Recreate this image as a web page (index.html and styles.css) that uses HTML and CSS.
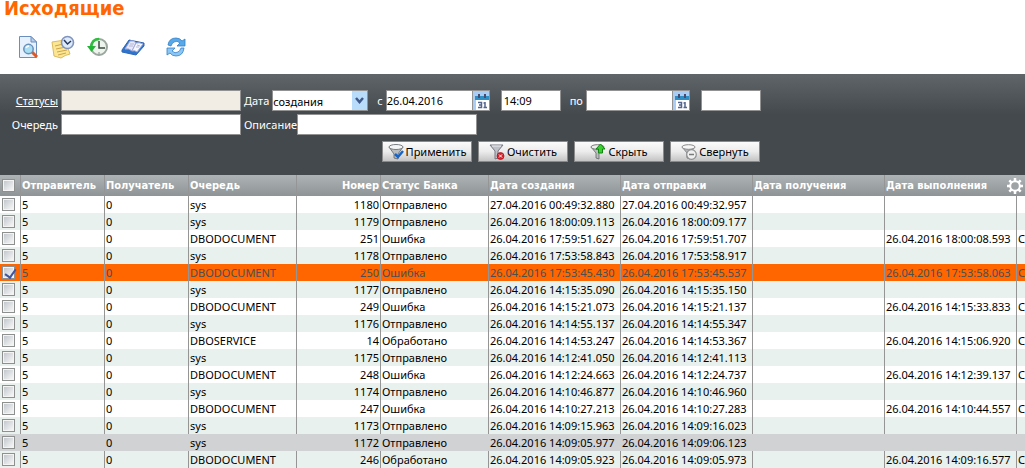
FILE: index.html
```html
<!DOCTYPE html>
<html lang="ru">
<head>
<meta charset="utf-8">
<title>Исходящие</title>
<link rel="stylesheet" href="styles.css">
</head>
<body>
<header class="page-head">
  <h1 class="title">Исходящие</h1>
  <nav class="toolbar" aria-label="Действия">
    <button class="tool" type="button" aria-label="Просмотр">
      <svg viewBox="0 0 24 24"><path d="M3.500 1.500H15L20.500 7V22.500H3.500Z" fill="#e6f1fd" stroke="#6a8fbd"/><path d="M15 1.500V7H20.500Z" fill="#b7cfeb" stroke="#6a8fbd"/><path d="M16 17L21 22" stroke="#e8561c" stroke-width="3"/><circle cx="12.500" cy="14" r="4.700" fill="#a9dff2" stroke="#668fba" stroke-width="1.500"/><path d="M10 13Q11 11 13 11" fill="none" stroke="#fff" stroke-width="1.500"/></svg>
    </button>
    <button class="tool" type="button" aria-label="Расписание">
      <svg viewBox="0 0 24 24"><path d="M1 7L14 5L19 19Q14 20 10 23L3 21Z" fill="#fbe694" stroke="#dcbb5c"/><path d="M4 11L12 9M5 14L15 12M6 17L16 15M7 20L15 18" stroke="#cda449"/><circle cx="16.500" cy="7.500" r="6" fill="#dceafa" stroke="#8094bd" stroke-width="1.600"/><path d="M13 5L16.500 9L20 6" fill="none" stroke="#26385f" stroke-width="1.500"/></svg>
    </button>
    <button class="tool" type="button" aria-label="История">
      <svg viewBox="0 0 24 24"><circle cx="13" cy="12" r="8" fill="#edf3ed" stroke="#9aa69e" stroke-width="2"/><path d="M13 6V13H19" fill="none" stroke="#3d4942" stroke-width="1.500"/><path d="M13 4Q6 4 5 12" fill="none" stroke="#2fbd3d" stroke-width="2.500"/><path d="M1 11H10L5.500 17Z" fill="#20b832"/><path d="M13 17V19M8 12H9" stroke="#7e8c84"/></svg>
    </button>
    <button class="tool" type="button" aria-label="Справочник">
      <svg viewBox="0 0 24 24"><path d="M1 15L8 5L23 8V11L15 20L1 17Z" fill="#2d74cf" stroke="#2f66b4"/><path d="M4 14L9 6Q13 5 15 8L11 16Q8 13 4 14Z" fill="#e7e8fa" stroke="#a4a9d4"/><path d="M15 8Q18 7 22 9L16 17Q14 15 11 16Z" fill="#f7f7ff" stroke="#a4a9d4"/><path d="M8 11L12 11M9 9L13 9M15 12L18 12M16 10L19 11" stroke="#b4b7d6"/></svg>
    </button>
    <button class="tool tool-refresh" type="button" aria-label="Обновить">
      <svg viewBox="0 0 24 24"><path d="M4 10Q5 3 12 3Q16 3 18 6L21 4V11H13L16 8Q13 5 10 7Q8 8 7 11Z" fill="#57a9e9" stroke="#3480c8" stroke-width=".8"/><path d="M20 13Q19 21 12 21Q8 21 6 18L3 20V13H11L8 16Q11 19 14 17Q16 16 17 13Z" fill="#8bc7f5" stroke="#3480c8" stroke-width=".8"/></svg>
    </button>
  </nav>
</header>

<form class="filter">
  <div class="line">
    <label class="lead" for="statuses"><u>Статусы</u></label>
    <input class="field wide readonly" id="statuses" readonly>
    <label class="lbl" for="datekind">Дата</label>
    <span class="picker">
      <select class="field pick" id="datekind"><option>создания</option></select>
      <svg class="arrow" viewBox="0 0 15 19"><path d="M0 0H15V19H0Z" fill="#b9dcfb"/><path d="M4 7L7.500 11L11 7" fill="none" stroke="#405a8c" stroke-width="2.500"/></svg>
    </span>
    <label class="lbl from" for="d1">с</label>
    <input class="field date" id="d1" value="26.04.2016">
    <button class="cal" type="button" aria-label="Выбрать дату начала">
      <svg viewBox="0 0 16 19"><path d="M0 0H16V19H0Z" fill="#a9cdf4"/><path d="M2 5H16V9H2Z" fill="#2f8fc4"/><path d="M3 9H16V19H3Z" fill="#fff"/><path d="M6 3V7M12 3V7" stroke="#4b4a6c" stroke-width="2"/><path d="M5 11.500H8.500V16.500H5M6 14H8.500M12 11V17M10.500 12H12M10.500 16.500H14" fill="none" stroke="#53668f" stroke-width="1.500"/></svg>
    </button>
    <input class="field time" aria-label="Время начала" value="14:09">
    <label class="lbl to" for="d2">по</label>
    <input class="field date" id="d2">
    <button class="cal" type="button" aria-label="Выбрать дату окончания">
      <svg viewBox="0 0 16 19"><path d="M0 0H16V19H0Z" fill="#a9cdf4"/><path d="M2 5H16V9H2Z" fill="#2f8fc4"/><path d="M3 9H16V19H3Z" fill="#fff"/><path d="M6 3V7M12 3V7" stroke="#4b4a6c" stroke-width="2"/><path d="M5 11.500H8.500V16.500H5M6 14H8.500M12 11V17M10.500 12H12M10.500 16.500H14" fill="none" stroke="#53668f" stroke-width="1.500"/></svg>
    </button>
    <input class="field time" aria-label="Время окончания">
  </div>
  <div class="line">
    <label class="lead" for="queue">Очередь</label>
    <input class="field wide" id="queue">
    <label class="lbl tight" for="descr">Описание</label>
    <input class="field wide" id="descr">
  </div>
  <div class="actions">
    <button class="btn" type="button"><svg viewBox="0 0 16 16"><path d="M1 3L6 10V14L10 15V10L15 3Z" fill="#b9bdc0" stroke="#5d6265" stroke-width=".8"/><ellipse cx="8" cy="3" rx="7" ry="2.500" fill="#f4f5f5" stroke="#777c80"/><path d="M7 10L10 13L15 7" fill="none" stroke="#1664c8" stroke-width="2.500"/></svg>Применить</button>
    <button class="btn" type="button"><svg viewBox="0 0 16 16"><path d="M1 1H14L9 7V14L6 15V7Z" fill="#bfc1c9" stroke="#777983"/><path d="M3 2H12" stroke="#eeeef4"/><circle cx="11.500" cy="12" r="3.500" fill="#d8222c" stroke="#a60f19" stroke-width=".7"/><path d="M10 10.500L13 13.500M13 10.500L10 13.500" stroke="#fff"/></svg>Очистить</button>
    <button class="btn" type="button"><svg viewBox="0 0 16 16"><path d="M1 3L6 9V14L9 15V9L14 3Z" fill="#b9bdbd" stroke="#626666" stroke-width=".8"/><ellipse cx="7.500" cy="3" rx="6.500" ry="2.300" fill="#eee" stroke="#777"/><path d="M10.500 0L15 5H12.500V9H8.500V5H6Z" fill="#39d02e" stroke="#158316"/></svg>Скрыть</button>
    <button class="btn" type="button"><svg viewBox="0 0 16 16"><path d="M1 3L6 9V14L9 15V9L14 3Z" fill="#b6b8b9" stroke="#77797a" stroke-width=".8"/><ellipse cx="7.500" cy="3" rx="6.500" ry="2.300" fill="#f7f7f7" stroke="#8b8b8b"/><circle cx="10.500" cy="10.500" r="4.800" fill="#efefef" stroke="#8d8f90" stroke-width="1.200"/><path d="M8 10.500H13" stroke="#77797a" stroke-width="1.500"/></svg>Свернуть</button>
  </div>
</form>

<main class="grid">
<table class="list">
<colgroup><col class="c-check"><col class="c-party"><col class="c-party"><col class="c-queue"><col class="c-party"><col class="c-queue"><col class="c-date"><col class="c-date"><col class="c-date"><col class="c-date"><col></colgroup>
<thead><tr><th><input type="checkbox" aria-label="Выбрать все"></th><th>Отправитель</th><th>Получатель</th><th>Очередь</th><th class="num">Номер</th><th>Статус Банка</th><th>Дата создания</th><th>Дата отправки</th><th>Дата получения</th><th colspan="2"><span class="last-head">Дата выполнения<button class="gear" type="button" aria-label="Настройки"><svg viewBox="0 0 18 18"><g stroke="#fff" stroke-width="2.500"><path d="M9 1V17M1 9H17M3.300 3.300L14.700 14.700M14.700 3.300L3.300 14.700"/></g><circle cx="9" cy="9" r="4.800" fill="#9ea3a6" stroke="#fff" stroke-width="2"/></svg></button></span></th></tr></thead>
<tbody>
<tr><td><input type="checkbox" aria-label="1180"></td><td>5</td><td>0</td><td>sys</td><td class="num">1180</td><td>Отправлено</td><td>27.04.2016 00:49:32.880</td><td>27.04.2016 00:49:32.957</td><td></td><td></td><td></td></tr>
<tr><td><input type="checkbox" aria-label="1179"></td><td>5</td><td>0</td><td>sys</td><td class="num">1179</td><td>Отправлено</td><td>26.04.2016 18:00:09.113</td><td>26.04.2016 18:00:09.177</td><td></td><td></td><td></td></tr>
<tr><td><input type="checkbox" aria-label="251"></td><td>5</td><td>0</td><td>DBODOCUMENT</td><td class="num">251</td><td>Ошибка</td><td>26.04.2016 17:59:51.627</td><td>26.04.2016 17:59:51.707</td><td></td><td>26.04.2016 18:00:08.593</td><td>С</td></tr>
<tr><td><input type="checkbox" aria-label="1178"></td><td>5</td><td>0</td><td>sys</td><td class="num">1178</td><td>Отправлено</td><td>26.04.2016 17:53:58.843</td><td>26.04.2016 17:53:58.917</td><td></td><td></td><td></td></tr>
<tr class="selected"><td><input type="checkbox" aria-label="250" checked></td><td>5</td><td>0</td><td>DBODOCUMENT</td><td class="num">250</td><td>Ошибка</td><td>26.04.2016 17:53:45.430</td><td>26.04.2016 17:53:45.537</td><td></td><td>26.04.2016 17:53:58.063</td><td>С</td></tr>
<tr><td><input type="checkbox" aria-label="1177"></td><td>5</td><td>0</td><td>sys</td><td class="num">1177</td><td>Отправлено</td><td>26.04.2016 14:15:35.090</td><td>26.04.2016 14:15:35.150</td><td></td><td></td><td></td></tr>
<tr><td><input type="checkbox" aria-label="249"></td><td>5</td><td>0</td><td>DBODOCUMENT</td><td class="num">249</td><td>Ошибка</td><td>26.04.2016 14:15:21.073</td><td>26.04.2016 14:15:21.137</td><td></td><td>26.04.2016 14:15:33.833</td><td>С</td></tr>
<tr><td><input type="checkbox" aria-label="1176"></td><td>5</td><td>0</td><td>sys</td><td class="num">1176</td><td>Отправлено</td><td>26.04.2016 14:14:55.137</td><td>26.04.2016 14:14:55.347</td><td></td><td></td><td></td></tr>
<tr><td><input type="checkbox" aria-label="14"></td><td>5</td><td>0</td><td>DBOSERVICE</td><td class="num">14</td><td>Обработано</td><td>26.04.2016 14:14:53.247</td><td>26.04.2016 14:14:53.367</td><td></td><td>26.04.2016 14:15:06.920</td><td>С</td></tr>
<tr><td><input type="checkbox" aria-label="1175"></td><td>5</td><td>0</td><td>sys</td><td class="num">1175</td><td>Отправлено</td><td>26.04.2016 14:12:41.050</td><td>26.04.2016 14:12:41.113</td><td></td><td></td><td></td></tr>
<tr><td><input type="checkbox" aria-label="248"></td><td>5</td><td>0</td><td>DBODOCUMENT</td><td class="num">248</td><td>Ошибка</td><td>26.04.2016 14:12:24.663</td><td>26.04.2016 14:12:24.737</td><td></td><td>26.04.2016 14:12:39.137</td><td>С</td></tr>
<tr><td><input type="checkbox" aria-label="1174"></td><td>5</td><td>0</td><td>sys</td><td class="num">1174</td><td>Отправлено</td><td>26.04.2016 14:10:46.877</td><td>26.04.2016 14:10:46.960</td><td></td><td></td><td></td></tr>
<tr><td><input type="checkbox" aria-label="247"></td><td>5</td><td>0</td><td>DBODOCUMENT</td><td class="num">247</td><td>Ошибка</td><td>26.04.2016 14:10:27.213</td><td>26.04.2016 14:10:27.283</td><td></td><td>26.04.2016 14:10:44.557</td><td>С</td></tr>
<tr><td><input type="checkbox" aria-label="1173"></td><td>5</td><td>0</td><td>sys</td><td class="num">1173</td><td>Отправлено</td><td>26.04.2016 14:09:15.963</td><td>26.04.2016 14:09:16.023</td><td></td><td></td><td></td></tr>
<tr class="hovered"><td><input type="checkbox" aria-label="1172"></td><td>5</td><td>0</td><td>sys</td><td class="num">1172</td><td>Отправлено</td><td>26.04.2016 14:09:05.977</td><td>26.04.2016 14:09:06.123</td><td></td><td></td><td></td></tr>
<tr><td><input type="checkbox" aria-label="246"></td><td>5</td><td>0</td><td>DBODOCUMENT</td><td class="num">246</td><td>Обработано</td><td>26.04.2016 14:09:05.923</td><td>26.04.2016 14:09:05.973</td><td></td><td>26.04.2016 14:09:16.577</td><td>С</td></tr>
</tbody>
</table>
</main>
</body>
</html>
```
FILE: styles.css
```css
* { box-sizing: border-box; }
body {
  margin: 0;
  background: #fff;
  color: #000;
  font: 11px/17px "Noto Sans", "Open Sans", sans-serif;
  overflow: hidden;
}
button, input, select { font: inherit; color: inherit; margin: 0; padding: 0; }
svg { display: block; flex: none; }

.page-head { padding-bottom: 15px; }
.title {
  margin: 0;
  padding-left: 4px;
  color: #ff6600;
  font: bold 20px/16px "DejaVu Sans Condensed", "DejaVu Sans", sans-serif;
}
.toolbar { display: flex; gap: 11px; padding: 19px 0 0 16px; }
.tool { width: 24px; height: 24px; border: 0; background: none; }
.tool svg { width: 24px; height: 24px; }
.tool-refresh { margin-left: 8px; }

.filter {
  display: flex;
  flex-direction: column;
  gap: 3px;
  padding: 16px 0 13px;
  background: linear-gradient(#5f6569, #43494d 40%);
  color: #fff;
}
.line { display: flex; height: 21px; line-height: 21px; white-space: nowrap; }
.lead { width: 61px; padding-right: 3px; text-align: right; }
.lbl { padding: 0 3px; }
.tight { padding-right: 0; }
.from { padding-left: 9px; }
.to { padding-left: 9px; }
.field {
  height: 21px;
  border: 1px solid #929292;
  border-radius: 0;
  background: #fff;
  color: #000;
}
.wide { width: 180px; }
.readonly { background: #f1ede5; }
.date { width: 87px; }
.time { width: 60px; padding-left: 2px; }
.picker { display: grid; width: 96px; }
.picker > * { grid-area: 1 / 1; }
.pick { appearance: none; width: 100%; }
.arrow { justify-self: end; align-self: center; width: 15px; height: 19px; margin-right: 1px; pointer-events: none; }
.cal { width: 17px; height: 21px; margin-right: 11px; border: solid #929292; border-width: 1px 1px 1px 0; }
.cal svg { width: 16px; height: 19px; }
.actions { display: flex; justify-content: flex-end; gap: 6px; max-width: 760px; padding-top: 3px; }
.btn {
  display: flex;
  justify-content: center;
  align-items: center;
  gap: 2px;
  width: 90px;
  height: 21px;
  border: 1px solid #8a8a8a;
  background: linear-gradient(#fbfbfb, #ececec 50%, #c4c4c4);
  color: #000;
}
.btn svg { width: 16px; height: 16px; }

.list { width: 100%; table-layout: fixed; border-collapse: separate; border-spacing: 0; }
.c-check { width: 21px; }
.c-party { width: 84px; }
.c-queue { width: 108px; }
.c-date { width: 132px; }
th, td {
  height: 17px;
  padding: 0 1px;
  border-right: 1px solid #959595;
  overflow: hidden;
  text-align: left;
  white-space: nowrap;
}
th:last-child, td:last-child { border-right: 0; }
th {
  height: 21px;
  background: linear-gradient(#aeb3b6, #8e9396);
  color: #fff;
  font-family: "DejaVu Sans Condensed", "DejaVu Sans", sans-serif;
  font-weight: bold;
}
.num { text-align: right; }
.last-head { display: flex; justify-content: space-between; align-items: center; }
.gear { width: 18px; height: 18px; border: 0; background: none; }
.gear svg { width: 18px; height: 18px; }
tbody tr:nth-child(even) { background: #e9f1ee; }
tbody tr.hovered { background: #d1d2d4; }
.hovered td { border-right-color: transparent; }
tbody tr.selected { background: #ff6600; color: #4b4f52; }
input[type="checkbox"] {
  appearance: none;
  display: block;
  width: 13px;
  height: 13px;
  margin-left: 1px;
  border: 1px solid #8e8f8f;
  background: linear-gradient(135deg, #c3c8ce, #f6f6f6) center / 9px 9px no-repeat #f4f4f4;
}
input[type="checkbox"]:checked::before {
  content: "";
  display: block;
  width: 5px;
  height: 9px;
  margin: 0 0 0 4px;
  border: solid #4054a0;
  border-width: 0 2px 2px 0;
  transform: rotate(35deg);
}
```
